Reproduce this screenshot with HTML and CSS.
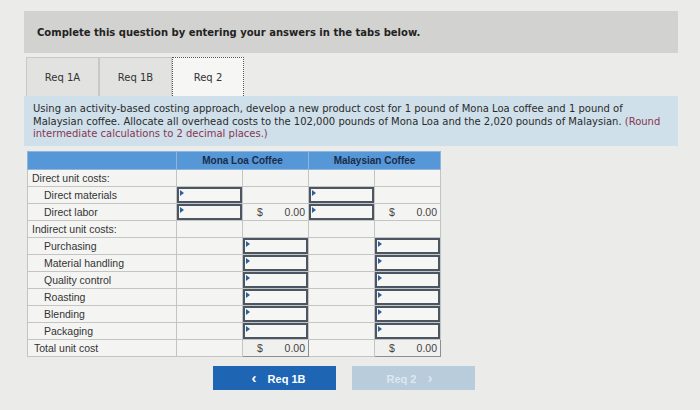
FILE: index.html
```html
<!DOCTYPE html>
<html lang="en">
<head>
  <meta charset="UTF-8">
  <title>Req 2</title>
  <link rel="stylesheet" href="styles.css">
</head>
<body>

  <div class="page">
    <div class="header">Complete this question by entering your answers in the tabs below.</div>

    <div class="tabs">
      <div class="tab">Req 1A</div>
      <div class="tab">Req 1B</div>
      <div class="tab active">Req 2</div>
    </div>

    <div class="instructions">
      Using an activity-based costing approach, develop a new product cost for 1 pound of Mona Loa coffee and 1 pound of
      Malaysian coffee. Allocate all overhead costs to the 102,000 pounds of Mona Loa and the 2,020 pounds of Malaysian.
      <span class="round">(Round</span><br>
      <span class="round">intermediate calculations to 2 decimal places.)</span>
    </div>

    <table class="costs">
      <colgroup>
        <col class="c-label">
        <col class="c-num"><col class="c-num">
        <col class="c-num"><col class="c-num">
      </colgroup>
      <thead>
        <tr>
          <th></th>
          <th colspan="2">Mona Loa Coffee</th>
          <th colspan="2">Malaysian Coffee</th>
        </tr>
      </thead>
      <tbody>
        <tr>
          <td class="label">Direct unit costs:</td>
          <td></td><td></td><td></td><td></td>
        </tr>
        <tr>
          <td class="label sub">Direct materials</td>
          <td class="in"><div class="box"></div></td><td></td>
          <td class="in"><div class="box"></div></td><td></td>
        </tr>
        <tr>
          <td class="label sub">Direct labor</td>
          <td class="in"><div class="box"></div></td><td class="val"><span>$</span><span>0.00</span></td>
          <td class="in"><div class="box"></div></td><td class="val"><span>$</span><span>0.00</span></td>
        </tr>
        <tr>
          <td class="label">Indirect unit costs:</td>
          <td></td><td></td><td></td><td></td>
        </tr>
        <tr>
          <td class="label sub">Purchasing</td>
          <td></td><td class="in"><div class="box"></div></td>
          <td></td><td class="in"><div class="box"></div></td>
        </tr>
        <tr>
          <td class="label sub">Material handling</td>
          <td></td><td class="in"><div class="box"></div></td>
          <td></td><td class="in"><div class="box"></div></td>
        </tr>
        <tr>
          <td class="label sub">Quality control</td>
          <td></td><td class="in"><div class="box"></div></td>
          <td></td><td class="in"><div class="box"></div></td>
        </tr>
        <tr>
          <td class="label sub">Roasting</td>
          <td></td><td class="in"><div class="box"></div></td>
          <td></td><td class="in"><div class="box"></div></td>
        </tr>
        <tr>
          <td class="label sub">Blending</td>
          <td></td><td class="in"><div class="box"></div></td>
          <td></td><td class="in"><div class="box"></div></td>
        </tr>
        <tr>
          <td class="label sub">Packaging</td>
          <td></td><td class="in"><div class="box"></div></td>
          <td></td><td class="in"><div class="box"></div></td>
        </tr>
        <tr class="total">
          <td class="label">Total unit cost</td>
          <td></td><td class="val sum"><span>$</span><span>0.00</span></td>
          <td></td><td class="val sum"><span>$</span><span>0.00</span></td>
        </tr>
      </tbody>
    </table>

    <div class="nav">
      <button class="btn prev"><span class="arrow">&lsaquo;</span> Req 1B</button>
      <button class="btn next">Req 2 <span class="arrow">&rsaquo;</span></button>
    </div>
  </div>

</body>
</html>
```

FILE: styles.css
```css
body {
  margin: 0;
  background-color: #ebecea;
  font-family: "DejaVu Sans", Verdana, sans-serif;
  color: #2b2b2b;
}
.page {
  width: 654px;
  padding: 11px 0 0 24px;
}
.header {
  height: 42px;
  display: flex;
  align-items: center;
  padding-left: 13px;
  background-color: #d2d2d0;
  font-size: 10px;
  font-weight: bold;
  color: #222;
}
.tabs {
  display: flex;
  margin-top: 4px;
  padding-left: 2px;
  height: 39px;
}
.tab {
  width: 71px;
  display: flex;
  align-items: center;
  justify-content: center;
  background-color: #e2e2e0;
  border: 1px solid #c8c8c6;
  border-bottom: none;
  font-size: 10px;
  color: #333;
}
.tab.active {
  width: 70px;
  background-color: #f6f6f4;
  border: 1px dotted #555;
  border-bottom: none;
}
.instructions {
  background-color: #cfe0ea;
  padding: 7px 9px 5px 9px;
  font-size: 10px;
  line-height: 12.6px;
  color: #2b2b2b;
}
.round {
  color: #8a3550;
}
.costs {
  margin: 5px 0 0 3px;
  border-collapse: collapse;
  font-family: "Liberation Sans", Arial, sans-serif;
  font-size: 10.5px;
  color: #333;
  background-color: #f4f5f3;
}
.c-label {
  width: 149px;
}
.c-num {
  width: 66px;
}
.costs th {
  height: 17px;
  padding: 0;
  background-color: #5697d8;
  border: 1px solid #8fb5dc;
  font-weight: bold;
  font-size: 10px;
  color: #1b2b48;
}
.costs td {
  height: 16px;
  padding: 0;
  border: 1px solid #c4c5c3;
  line-height: 14px;
}
.costs td.label {
  padding-left: 4px;
}
.costs td.sub {
  padding-left: 16px;
}
.costs tr.total td.label {
  padding-left: 6px;
}
.box {
  position: relative;
  height: 12px;
  border: 2px solid #4c5662;
  background-color: #f6f7f5;
}
.box::before {
  content: "";
  position: absolute;
  top: 1px;
  left: 1px;
  border-top: 3px solid transparent;
  border-bottom: 3px solid transparent;
  border-left: 4px solid #2f5f9a;
}
.val {
  color: #444;
}
.val span:first-child {
  float: left;
  padding-left: 14px;
}
.val span:last-child {
  float: right;
  padding-right: 3px;
}
.sum {
  background-color: #f0f0ee;
  border: 1px solid #8e8f8d !important;
}
.nav {
  display: flex;
  gap: 16px;
  margin: 9px 0 0 189px;
}
.btn {
  width: 123px;
  height: 24px;
  border: none;
  font-family: "Liberation Sans", Arial, sans-serif;
  font-size: 11px;
  font-weight: bold;
  color: #fff;
}
.btn .arrow {
  font-size: 15px;
  margin: 0 8px;
}
.prev {
  background-color: #1e65b4;
}
.next {
  background-color: #b9ccdb;
  color: #dde8f0;
}
```
